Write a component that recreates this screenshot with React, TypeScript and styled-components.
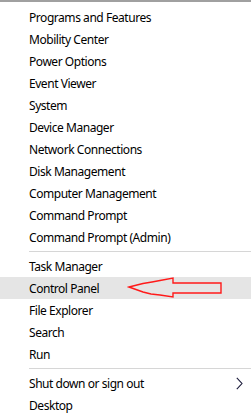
import styled, { createGlobalStyle } from "styled-components";

const GlobalStyle = createGlobalStyle`
  html, body {
    margin: 0;
    padding: 0;
    background: #ffffff;
  }
`;

const groups: string[][] = [
  [
    "Programs and Features",
    "Mobility Center",
    "Power Options",
    "Event Viewer",
    "System",
    "Device Manager",
    "Network Connections",
    "Disk Management",
    "Computer Management",
    "Command Prompt",
    "Command Prompt (Admin)",
  ],
  ["Task Manager", "Control Panel", "File Explorer", "Search", "Run"],
  ["Shut down or sign out", "Desktop"],
];

export default function App() {
  return (
    <>
      <GlobalStyle />
      <Menu>
        {groups.map((items, gi) => (
          <Group key={gi}>
            {gi > 0 && <Separator />}
            {items.map((label) => (
              <Item key={label} $active={label === "Control Panel"}>
                <Label>{label}</Label>
                {label === "Shut down or sign out" && (
                  <Chevron viewBox="0 0 7 13" width="7" height="13">
                    <path d="M0.8 0.8 L6 6.5 L0.8 12.2" />
                  </Chevron>
                )}
                {label === "Control Panel" && (
                  <Arrow viewBox="0 0 251 22" width="251" height="22">
                    <path d="M129 10 L143 6.5 L152 5 L160 3.5 L173 1 L173 6 L221 6 L221 16 L173 16 L173 20 L160 18 L151 17 L143 15 Z" />
                  </Arrow>
                )}
              </Item>
            ))}
          </Group>
        ))}
      </Menu>
    </>
  );
}

const Menu = styled.div`
  width: 251px;
  height: 417px;
  box-sizing: border-box;
  border-top: 2px solid #a0a0a0;
  padding-top: 4px;
  background: #ffffff;
  display: flex;
  flex-direction: column;
  overflow: hidden;
`;

const Group = styled.div`
  display: flex;
  flex-direction: column;
`;

const Separator = styled.div`
  height: 1px;
  margin: 3px 0 3px 29px;
  background: #d6d6d6;
`;

const Item = styled.div<{ $active?: boolean }>`
  position: relative;
  height: 22px;
  display: flex;
  align-items: center;
  padding-left: 29px;
  background: ${(p) => (p.$active ? "#e5e5e5" : "transparent")};
`;

const Label = styled.span`
  font-family: "Noto Sans", "Open Sans", sans-serif;
  font-size: 12px;
  letter-spacing: -0.45px;
  color: #000000;
  white-space: nowrap;
`;

const Chevron = styled.svg`
  position: absolute;
  left: 236px;
  top: 5px;
  fill: none;
  stroke: #1a1a3a;
  stroke-width: 1.1;
`;

const Arrow = styled.svg`
  position: absolute;
  left: 0;
  top: 0;
  fill: none;
  stroke: #ff1a1a;
  stroke-width: 1.4;
`;
